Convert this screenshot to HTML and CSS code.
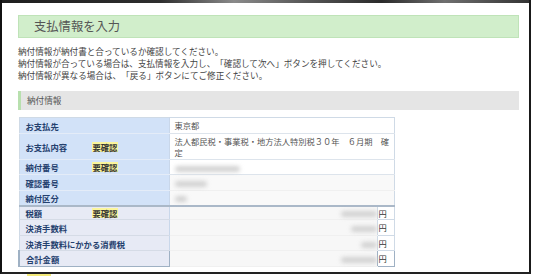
FILE: index.html
```html
<!DOCTYPE html>
<html lang="ja">
<head>
<meta charset="utf-8">
<title>支払情報を入力</title>
<link rel="stylesheet" href="styles.css">
</head>
<body>
<div class="frame">
  <div class="shade"></div>
  <div class="content">
    <div class="title-box"><h1>支払情報を入力</h1></div>
    <div class="intro">
      <p>納付情報が納付書と合っているか確認してください。</p>
      <p>納付情報が合っている場合は、支払情報を入力し、「確認して次へ」ボタンを押してください。</p>
      <p>納付情報が異なる場合は、「戻る」ボタンにてご修正ください。</p>
    </div>
    <div class="section-head">納付情報</div>
    <table class="info">
      <colgroup><col class="c-label"><col class="c-value"><col class="c-yen"></colgroup>
      <tbody class="upper">
        <tr class="r16"><th><span class="name">お支払先</span></th><td colspan="2">東京都</td></tr>
        <tr class="r26"><th><span class="name">お支払内容</span><span class="badge">要確認</span></th><td colspan="2" class="multi">法人都民税・事業税・地方法人特別税３０年　６月期　確定</td></tr>
        <tr class="r15"><th><span class="name">納付番号</span><span class="badge">要確認</span></th><td colspan="2"><span class="blur w65"></span></td></tr>
        <tr class="r16 masked"><th><span class="name">確認番号</span></th><td colspan="2"><span class="blur w32"></span></td></tr>
        <tr class="r15 masked"><th><span class="name">納付区分</span></th><td colspan="2"><span class="blur w12"></span></td></tr>
      </tbody>
      <tbody class="lower">
        <tr class="r14"><th><span class="name">税額</span><span class="badge">要確認</span></th><td class="amount"><span class="blur w36"></span></td><td class="yen">円</td></tr>
        <tr class="r16"><th><span class="name">決済手数料</span></th><td class="amount"><span class="blur w26"></span></td><td class="yen">円</td></tr>
        <tr class="r15"><th><span class="name wide">決済手数料にかかる消費税</span></th><td class="amount"><span class="blur w16"></span></td><td class="yen">円</td></tr>
        <tr class="r16 total"><th><span class="name">合計金額</span></th><td class="amount"><span class="blur w36"></span></td><td class="yen">円</td></tr>
      </tbody>
    </table>
  </div>
</div>
<div class="below"><span class="smear"></span></div>
</body>
</html>
```

FILE: styles.css
```css
* { box-sizing: border-box; margin: 0; padding: 0; }
html, body { width: 533px; height: 277px; overflow: hidden; background: #fff; }
body {
  font-family: "Noto Sans CJK JP", "Noto Sans", sans-serif;
  color: #444;
  text-spacing-trim: space-all;
}

.frame {
  width: 531px;
  height: 274px;
  border-left: 2px solid #111;
  border-right: 2px solid #1a1a1a;
  border-bottom: 2px solid #222;
  display: flex;
  flex-direction: column;
  overflow: hidden;
}
.shade {
  height: 3px;
  flex: none;
  background: linear-gradient(to right, #1e1e1e 0%, #2e2e2e 30%, #8a8a8a 44%, #555 58%, #2a2a2a 72%, #6f6f6f 84%, #333 100%);
}
.content { padding: 12px 10px 0 16px; }

.title-box {
  height: 23px;
  background: #d1eecb;
  border: 1px solid #bfe3b8;
  display: flex;
  align-items: center;
  padding-left: 15px;
}
.title-box h1 { font-size: 12.3px; font-weight: normal; color: #555; line-height: 1; }

.intro { margin-top: 7px; font-size: 8.6px; line-height: 12px; color: #444; }

.section-head {
  margin-top: 10px;
  height: 19px;
  background: #e5e5e5;
  border-left: 3px solid #b8e0ae;
  padding-left: 6px;
  font-size: 8.6px;
  line-height: 19px;
  color: #555;
}

.info {
  margin-top: 7px;
  width: 375px;
  border-collapse: collapse;
  table-layout: fixed;
  border: 1px solid #cfdae6;
}
.c-label { width: 150px; }
.c-value { width: 208px; }
.c-yen { width: 17px; }

.r14 { height: 14px; }
.r15 { height: 15px; }
.r16 { height: 16px; }
.r26 { height: 26px; }

.info th {
  text-align: left;
  font-size: 8.3px;
  font-weight: bold;
  color: #24406e;
  background: #d2e2f8;
  padding: 0 6px;
  border-bottom: 1px solid #e4ecf8;
  border-right: 1px solid #c9d7ea;
  white-space: nowrap;
  line-height: 1;
}
.info td {
  font-size: 8.25px;
  color: #555;
  background: #fff;
  padding: 0 5px;
  border-bottom: 1px solid #dde4ec;
  line-height: 10.5px;
}
.info td.multi { padding: 2px 1px 2px 5px; }

.name { display: inline-block; width: 66px; vertical-align: middle; }
.name.wide { width: auto; }
.badge {
  display: inline-block;
  vertical-align: middle;
  background: #fbf59c;
  color: #333;
  font-weight: bold;
  padding: 1px 1px;
  line-height: 8px;
}

.blur {
  display: inline-block;
  vertical-align: middle;
  height: 6px;
  background: #d2d2d2;
  border-radius: 3px;
  filter: blur(2px);
}
.w12 { width: 12px; }
.w16 { width: 16px; }
.w26 { width: 26px; }
.w32 { width: 32px; }
.w36 { width: 36px; }
.w65 { width: 65px; }

.masked td { background: #f9f9f9; border-bottom-color: #f0f0f0; }

.lower { border-top: 2px solid #aab8c8; }
.lower th { background: #e7eaf5; border-bottom: 1px solid #d5dbe6; }
.lower td.amount {
  background: #f7f7f7;
  border-bottom-color: #f0f0f0;
  text-align: right;
  padding: 0;
}
.lower td.yen {
  background: #fff;
  color: #333;
  padding: 0 0 0 1px;
  border: 1px solid #cfdae6;
  border-right: none;
}
.total th { border: 1px solid #9fb1c4; border-left-width: 2px; }
.total td.yen { border: 1px solid #9fb1c4; }

.below { height: 3px; position: relative; }
.smear { display: block; margin-left: 27px; width: 24px; height: 2px; background: #f4ea7a; }
```
